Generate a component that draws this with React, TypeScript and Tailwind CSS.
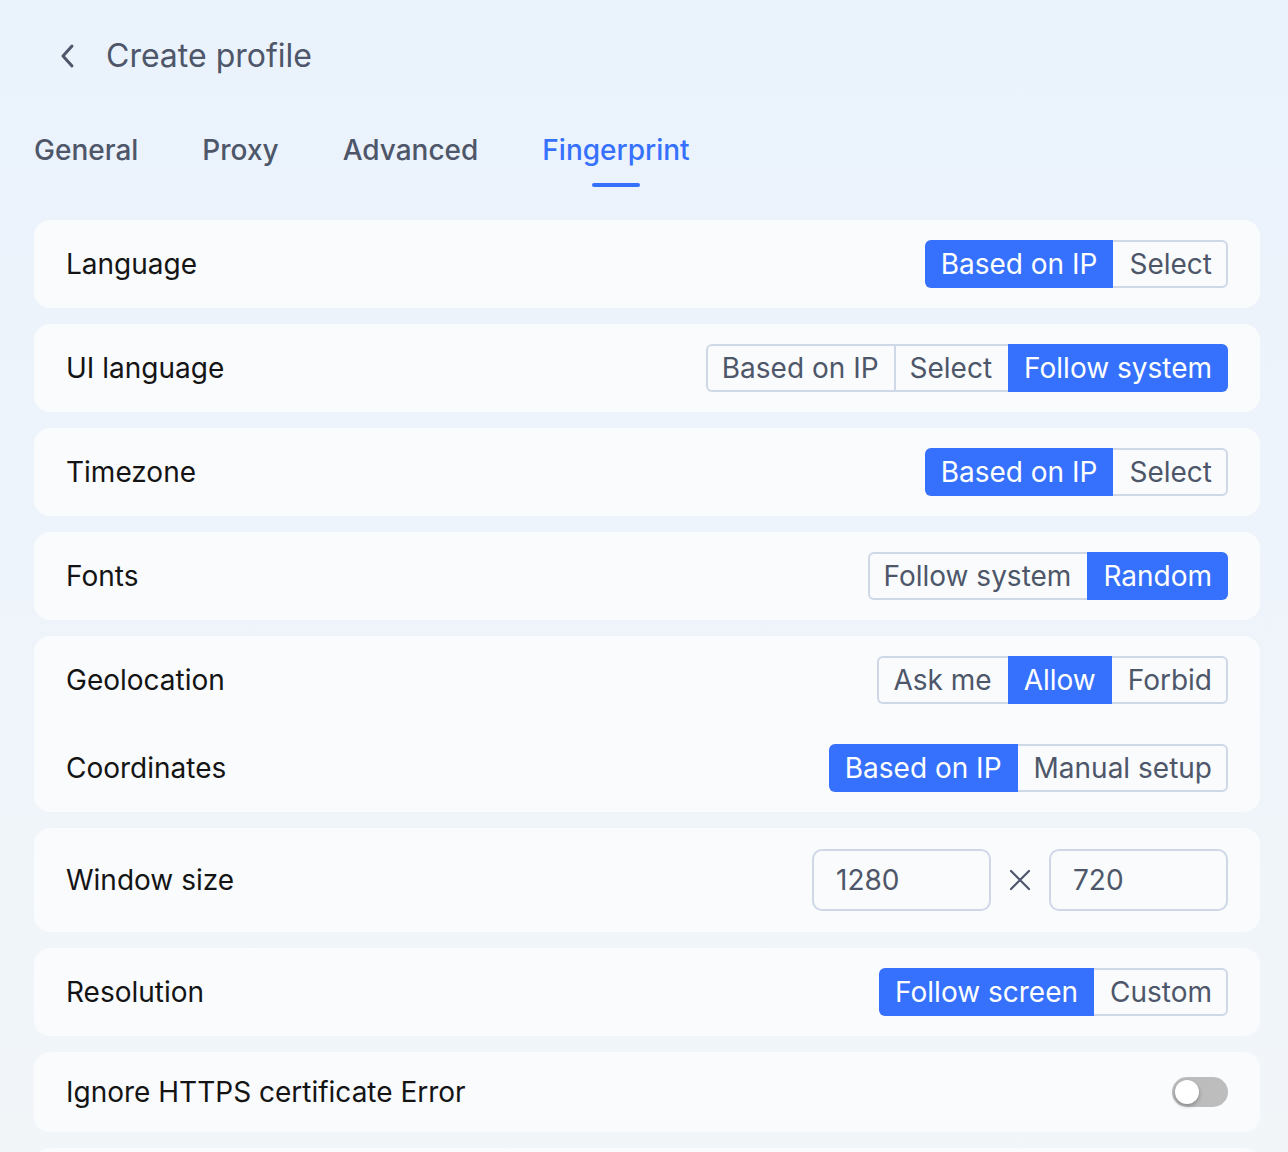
import React from "react";

type Seg = { label: string; active?: boolean };

function Segmented({ items }: { items: Seg[] }) {
  return (
    <div className="flex h-12">
      {items.map((it, i) => {
        const first = i === 0;
        const last = i === items.length - 1;
        const prevInactive = i > 0 && !items[i - 1].active;
        const nextInactive = !last && !items[i + 1].active;
        let cls = "flex h-12 items-center text-[28px] leading-none ";
        if (it.active) {
          cls += "bg-[#3571fd] text-white px-[16px] ";
        } else {
          cls += "bg-[#f9fbfd] text-[#4e5669] border-y-2 border-[#cfd8e6] ";
          cls += first || prevInactive ? "border-l-2 pl-[14px] " : "pl-[16px] ";
          cls += last ? "border-r-2 pr-[14px] " : nextInactive ? "pr-[15px] " : "pr-[16px] ";
        }
        if (first) cls += "rounded-l-[6px] ";
        if (last) cls += "rounded-r-[6px] ";
        return (
          <div key={i} className={cls}>
            {it.label}
          </div>
        );
      })}
    </div>
  );
}

function Card({ children, className = "" }: { children: React.ReactNode; className?: string }) {
  return (
    <div className={"rounded-[16px] bg-[#f9fbfd] px-8 " + className}>{children}</div>
  );
}

function Row({ label, right }: { label: string; right: React.ReactNode }) {
  return (
    <div className="flex h-12 items-center justify-between">
      <span className="text-[28px] text-[#141414]">{label}</span>
      {right}
    </div>
  );
}

export default function App() {
  return (
    <div
      className="min-h-[1152px] w-full bg-gradient-to-b from-[#eaf2fc] to-[#f2f6f9] pl-[34px] pr-[28px] pt-[30px]"
      style={{ fontFamily: "Inter, 'Noto Sans', sans-serif" }}
    >
      <div className="flex h-[52px] items-center">
        <svg width="24" height="28" viewBox="0 0 24 28" className="ml-[22px]" fill="none">
          <path d="M16 4 L7 14 L16 24" stroke="#4e5669" strokeWidth="3" strokeLinecap="round" strokeLinejoin="round" />
        </svg>
        <span className="ml-[26px] text-[32px] text-[#4e5669]">Create profile</span>
      </div>

      <div className="mt-[50px] flex gap-[64px]">
        {["General", "Proxy", "Advanced", "Fingerprint"].map((t) => (
          <div key={t} className="flex flex-col items-center">
            <span
              className={
                "text-[28px] font-medium leading-[36px] " + (t === "Fingerprint" ? "text-[#3571fd]" : "text-[#4e5669]")
              }
            >
              {t}
            </span>
            <div className={"mt-[15px] h-[4px] w-12 rounded-full " + (t === "Fingerprint" ? "bg-[#3571fd]" : "bg-transparent")} />
          </div>
        ))}
      </div>

      <div className="mt-[33px] flex flex-col gap-4">
        <Card className="py-5">
          <Row label="Language" right={<Segmented items={[{ label: "Based on IP", active: true }, { label: "Select" }]} />} />
        </Card>
        <Card className="py-5">
          <Row
            label="UI language"
            right={<Segmented items={[{ label: "Based on IP" }, { label: "Select" }, { label: "Follow system", active: true }]} />}
          />
        </Card>
        <Card className="py-5">
          <Row label="Timezone" right={<Segmented items={[{ label: "Based on IP", active: true }, { label: "Select" }]} />} />
        </Card>
        <Card className="py-5">
          <Row label="Fonts" right={<Segmented items={[{ label: "Follow system" }, { label: "Random", active: true }]} />} />
        </Card>
        <Card className="flex flex-col gap-10 py-5">
          <Row
            label="Geolocation"
            right={<Segmented items={[{ label: "Ask me" }, { label: "Allow", active: true }, { label: "Forbid" }]} />}
          />
          <Row
            label="Coordinates"
            right={<Segmented items={[{ label: "Based on IP", active: true }, { label: "Manual setup" }]} />}
          />
        </Card>
        <Card className="py-[21px]">
          <div className="flex h-[62px] items-center justify-between">
            <span className="text-[28px] text-[#141414]">Window size</span>
            <div className="flex items-center">
              <div className="flex h-[62px] w-[179px] items-center rounded-[10px] border-2 border-[#cfd8e6] px-[22px] text-[28px] text-[#4e5669]">
                1280
              </div>
              <svg width="58" height="24" viewBox="0 0 58 24" fill="none">
                <path d="M20 3 L38 21 M38 3 L20 21" stroke="#4e5669" strokeWidth="2.2" strokeLinecap="round" />
              </svg>
              <div className="flex h-[62px] w-[179px] items-center rounded-[10px] border-2 border-[#cfd8e6] px-[22px] text-[28px] text-[#4e5669]">
                720
              </div>
            </div>
          </div>
        </Card>
        <Card className="py-5">
          <Row label="Resolution" right={<Segmented items={[{ label: "Follow screen", active: true }, { label: "Custom" }]} />} />
        </Card>
        <Card className="py-4">
          <div className="flex h-12 items-center justify-between">
            <span className="text-[28px] text-[#141414]">Ignore HTTPS certificate Error</span>
            <div className="relative h-[30px] w-[56px] rounded-full bg-[#bcbdbc]">
              <div className="absolute left-[3px] top-[3px] h-6 w-6 rounded-full bg-white shadow-[0_2px_4px_rgba(0,0,0,0.3)]" />
            </div>
          </div>
        </Card>
        <Card className="h-12">
          <div />
        </Card>
      </div>
    </div>
  );
}
